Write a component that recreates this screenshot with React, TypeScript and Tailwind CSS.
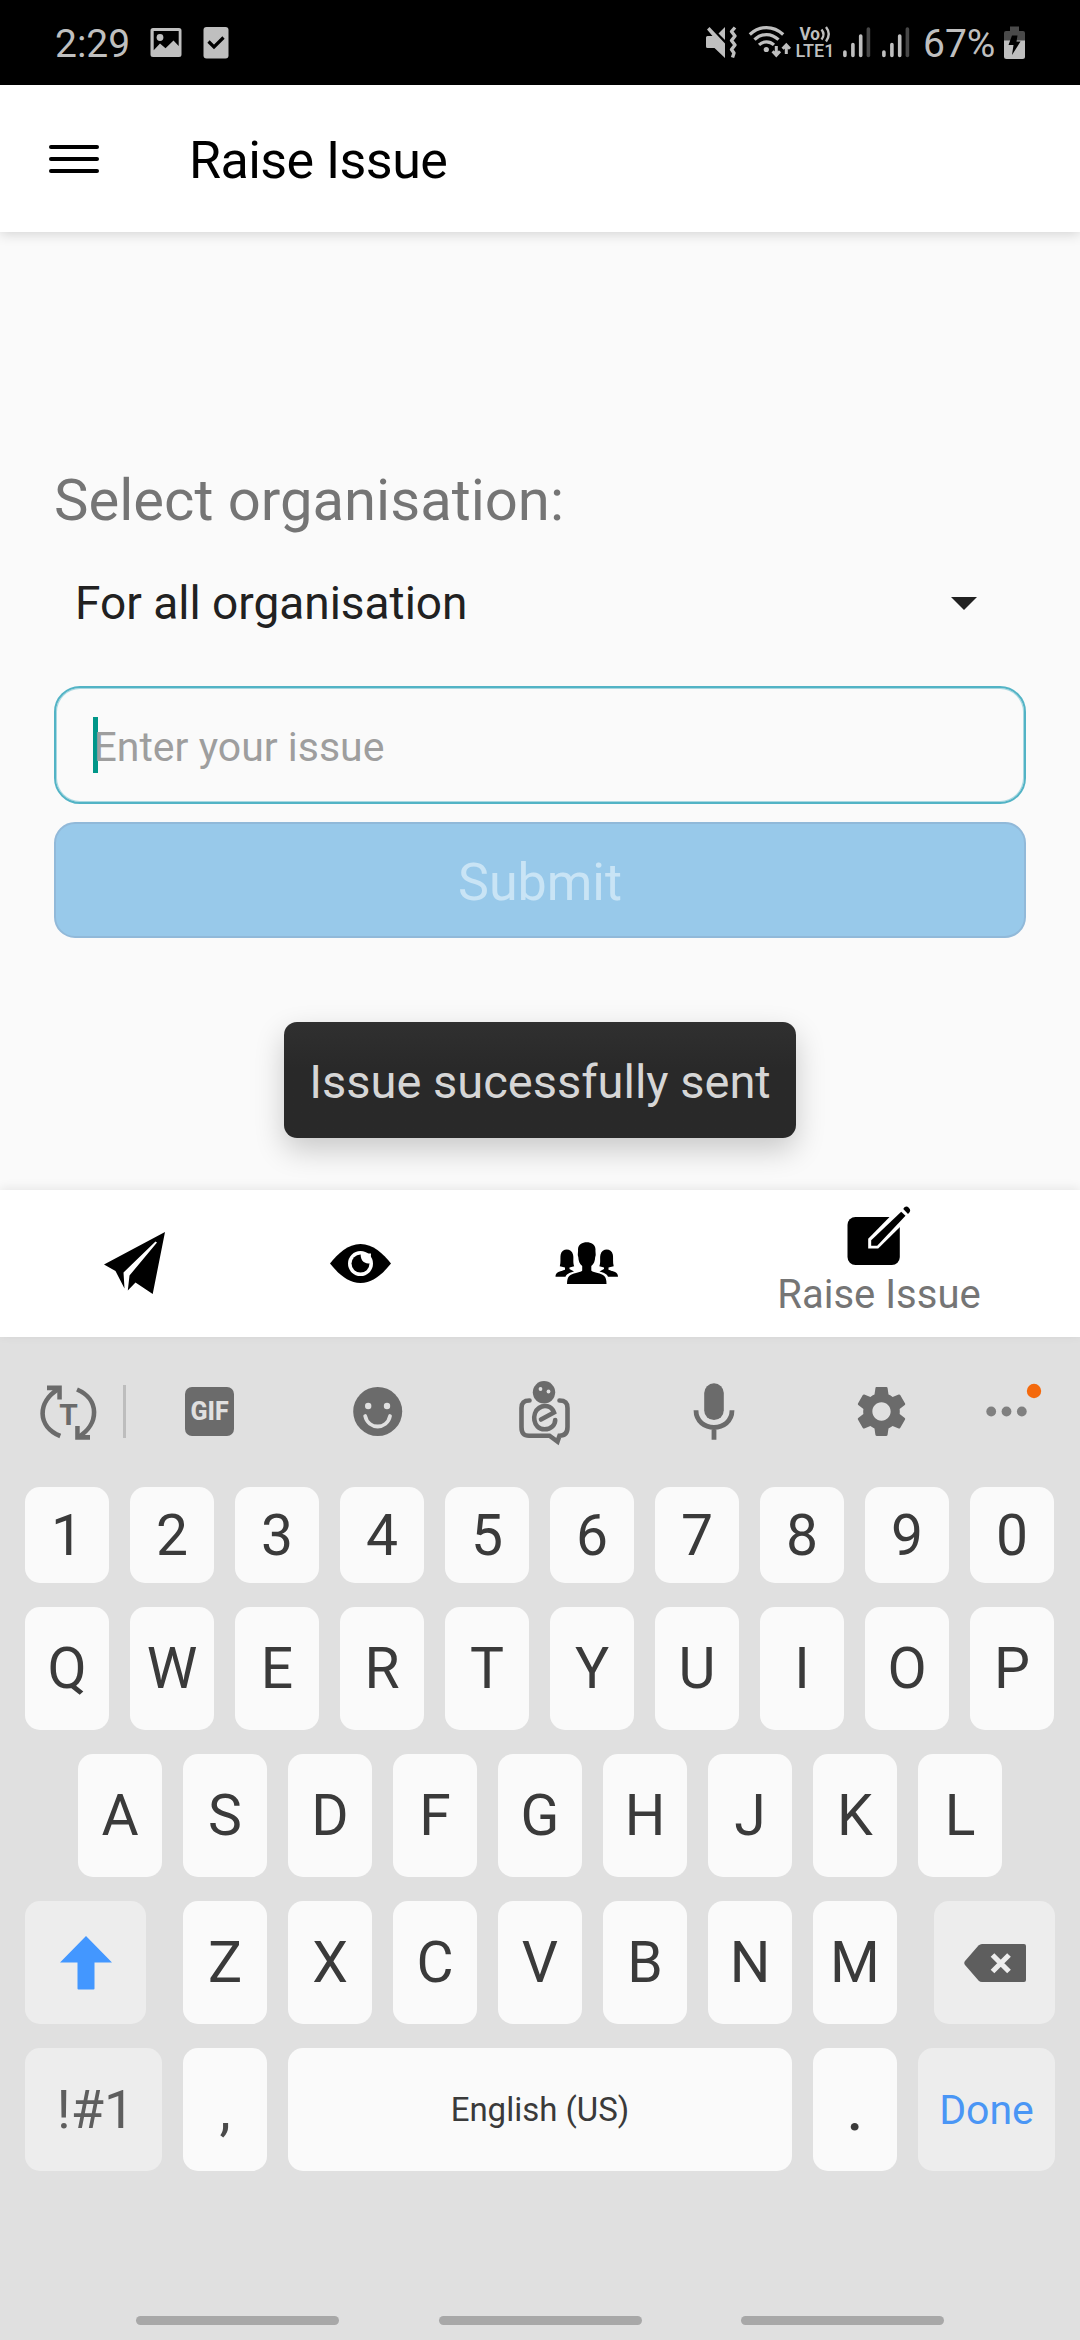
import React from "react";
import { MdSettings } from "react-icons/md";

const LIGHT = "#bfbfbf";
const GREY = "#6b6b6b";

function SignalBars({ x }: { x: number }) {
  return (
    <svg width="28" height="85" viewBox={`${x} 0 28 85`} className="shrink-0">
      <g strokeWidth="3.6" strokeLinecap="round" stroke={LIGHT}>
        <path d={`M${x + 1.9} 52V55.4M${x + 9.9} 44.5V55.4M${x + 17.7} 36V55.4`} />
        <path d={`M${x + 25.4} 29V55.4`} stroke="#474747" />
      </g>
    </svg>
  );
}

function StatusBar() {
  return (
    <div className="flex h-[85px] w-full items-center bg-black text-[#bfbfbf]">
      <span className="ml-[55px] w-[95px] pt-[4px] text-[39px] leading-none">2:29</span>
      <svg width="32" height="85" viewBox="150 0 32 85" className="shrink-0">
        <path
          fillRule="evenodd"
          fill={LIGHT}
          d="M153 28H179Q181.500 28 181.500 30.500V54.500Q181.500 57 179 57H153Q150.500 57 150.500 54.500V30.500Q150.500 28 153 28ZM153.700 31V50.300L160 43.500L165.500 48.300L173.500 40.500L178.700 46V31Z"
        />
        <circle cx="160" cy="37.500" r="3.400" fill={LIGHT} />
      </svg>
      <svg width="26" height="85" viewBox="203 0 26 85" className="ml-[21px] shrink-0">
        <rect x="203.500" y="27" width="25" height="31.600" rx="3" fill={LIGHT} />
        <path d="M208.500 41.500L214 47L223.500 37.500" fill="none" stroke="#000" strokeWidth="3.200" />
      </svg>

      <svg width="32" height="85" viewBox="706 0 32 85" className="ml-[477px] shrink-0">
        <path d="M706 37.500Q706 36 707.500 36H712.500L707 29.500L709.500 27L725 43.500V58L714.500 48H707.500Q706 48 706 46.500Z" fill={LIGHT} />
        <path d="M718.500 33.500L725 27V40Z" fill={LIGHT} />
        <path d="M735 27.500L731.500 31.500L735 36L731.500 40.500L735 45L731.500 49.500L734 53L732.500 57.500" fill="none" stroke={LIGHT} strokeWidth="3.400" strokeLinejoin="round" />
      </svg>
      <svg width="43" height="85" viewBox="748 0 43 85" className="ml-[10px] shrink-0">
        <g fill="none" stroke={LIGHT} strokeWidth="3.200">
          <path d="M749.800 34.500C759.500 25.200 773.500 25.200 783.200 34.500" />
          <path d="M754.500 39.700C761.500 32.800 771.500 32.800 778.500 39.700" />
          <path d="M759 44.900C763.500 40.800 769.500 40.800 774 44.900" />
          <path d="M776.300 46V55M772.600 51.300L776.300 55.200L780 51.300M786.300 54V45M782.600 48.800L786.300 44.900L790 48.800" strokeWidth="3" />
        </g>
        <circle cx="766.300" cy="49.500" r="2.600" fill={LIGHT} />
      </svg>
      <svg width="40" height="85" viewBox="795 0 40 85" className="ml-[4px] shrink-0" fontFamily="Roboto" fontWeight="700" fill={LIGHT}>
        <text x="799.500" y="40" fontSize="18" textLength="20.500" lengthAdjust="spacingAndGlyphs">Vo</text>
        <text x="795.500" y="57" fontSize="17.500" fontWeight="500" textLength="39" lengthAdjust="spacingAndGlyphs">LTE1</text>
        <path d="M821.500 29.500Q825.500 34.500 821.500 39.500M826 27Q831.500 34 826 41.500" fill="none" stroke={LIGHT} strokeWidth="2.400" />
      </svg>
      <div className="ml-[8px] flex gap-[11px]">
        <SignalBars x={843} />
        <SignalBars x={882} />
      </div>
      <span className="ml-[13px] w-[81px] pt-[4px] text-[39px] leading-none">67%</span>
      <svg width="22" height="85" viewBox="1004 0 22 85" className="shrink-0">
        <path d="M1010 26.500H1019V31H1023Q1025 31 1025 33V41H1004V33Q1004 31 1006 31H1010Z" fill="#4a4a4a" />
        <path d="M1004 40.500H1025V56.500Q1025 59 1022.500 59H1006.500Q1004 59 1004 56.500Z" fill={LIGHT} />
        <path d="M1012 35.500H1017.500L1016.500 41.500H1020.500L1012 55L1013.500 45H1008.500Z" fill="#000" />
      </svg>
    </div>
  );
}

function Header() {
  return (
    <header className="relative z-10 flex h-[147px] items-center bg-white pl-[49px] shadow-[0_2px_12px_rgba(0,0,0,0.16)]">
      <div className="flex w-[144px] flex-col gap-2">
        <span className="h-1 w-[50px] rounded-full bg-black" />
        <span className="h-1 w-[50px] rounded-full bg-black" />
        <span className="h-1 w-[50px] rounded-full bg-black" />
      </div>
      <h1 className="-ml-[4px] pt-[4px] text-[52px] leading-none tracking-[-0.55px] text-black">Raise Issue</h1>
    </header>
  );
}

function IssueForm() {
  return (
    <main className="h-[958px] bg-[#fafafa] px-[54px] pt-[229px]">
      <label className="block h-[78px] text-[58px] leading-[78px] text-[#757575]">Select organisation:</label>
      <div className="mt-[19px] flex h-[90px] items-center justify-between pl-[21px] pr-[49px]">
        <span className="text-[46px] leading-none text-[#212121]">For all organisation</span>
        <svg width="26" height="13" viewBox="0 0 26 13">
          <path d="M0 0H26L13 13Z" fill="#212121" />
        </svg>
      </div>
      <div className="mt-[38px] flex h-[118px] items-center rounded-[26px] border-2 border-[#52b3c5] pl-[37px] shadow-[inset_0_0_0_1px_#a8d8e1]">
        <span className="h-14 w-[4.500px] bg-[#009688]" />
        <span className="-ml-[4px] pt-1 text-[41px] leading-none text-[#9e9e9e]">Enter your issue</span>
      </div>
      <button className="mt-[18px] flex h-[116px] w-full items-center justify-center rounded-[21px] border-2 border-[#91b9d9] bg-[#98c9ea] pt-[5px] text-[52px] leading-none text-[#c9e4f5]">
        Submit
      </button>
      <div className="mx-auto mt-[84px] flex h-[116px] w-[512px] items-center justify-center rounded-[13px] bg-linear-to-b from-[#303030] to-[#292929] to-40% pt-[3px] text-[47px] leading-none text-[#d6d6d6] shadow-[0_12px_30px_rgba(0,0,0,0.2)]">
        Issue sucessfully sent
      </div>
    </main>
  );
}

function BottomNav() {
  return (
    <nav className="relative flex h-[147px] bg-white pl-[104px] shadow-[0_-2px_10px_rgba(0,0,0,0.08)]">
      <svg width="62" height="147" viewBox="104 1190 62 147">
        <path d="M104 1264.500L165 1232L152.700 1294L135.500 1282.500L127.800 1290.500L129.500 1275.500L157 1242.500L155.500 1241.500L123.500 1272.500L124.500 1288.500L115.500 1271Z" />
      </svg>
      <svg width="62" height="147" viewBox="330 1190 62 147" className="ml-[164px]">
        <path d="M330 1263.500C338 1253.500 348 1244 360.500 1244S383 1253.500 391 1263.500C383 1273.500 373 1283 360.500 1283S338 1273.500 330 1263.500Z" />
        <circle cx="360.500" cy="1263.600" r="12.500" fill="#fff" />
        <circle cx="360.500" cy="1263.600" r="9" />
        <path d="M360.700 1253.500C360.200 1259.500 363.500 1264.500 370.500 1263.200L371 1253.500Z" fill="#fff" />
      </svg>
      <svg width="64" height="147" viewBox="555 1190 64 147" className="ml-[163px]">
        <g id="member">
          <path d="M555.500 1276.700C555.500 1271.500 561 1271.500 565 1269.700V1267.500L559.800 1266.200C561 1262 560 1258 560.700 1254.500C562 1247.800 571.500 1247.800 573 1254.500C574 1258 572.500 1262 574.200 1266.200L569.500 1267.500V1269L574 1271.500C569 1273 566.500 1274 565.500 1276.700Z" />
        </g>
        <use href="#member" transform="translate(1173.500 0) scale(-1 1)" />
        <path d="M567 1284C567 1275.500 570 1274.500 576 1273C580 1272 581.500 1271.500 582.200 1270.500V1266C579.500 1264 578.500 1261 578.300 1257C577.200 1254 578.300 1253 578 1249.500C578 1239.800 595.500 1239.800 595.500 1249.500C595.200 1253 596.300 1254 595.200 1257C595 1261 594 1264 591.300 1266V1270.500C592 1271.500 593.500 1272 597.500 1273C603.500 1274.500 606.500 1275.500 606.500 1284Z" />
      </svg>
      <div className="ml-[157px] flex w-[206px] flex-col items-center pt-[16px]">
        <svg width="64" height="60" viewBox="846.500 1206.500 64 60">
          <rect x="847" y="1217.500" width="52.300" height="48" rx="8" />
          <path d="M890 1216.500L867.700 1239.300V1249H877.700L900.500 1226.500V1216Z" fill="#fff" />
          <path d="M900.700 1212.200L905 1216.300L876.700 1246.300H870.700V1240.700Z" />
          <path d="M902.800 1209.500C904.500 1206.500 906.500 1206.500 908.300 1208.300C910.300 1210.300 910.300 1212.300 907.500 1214.500Z" />
        </svg>
        <span className="mt-[9px] whitespace-nowrap text-[40px] leading-none text-[#757575]">Raise Issue</span>
      </div>
    </nav>
  );
}

function KeyboardToolbar() {
  return (
    <div className="relative flex h-[150px]">
      <svg width="58" height="150" viewBox="40 1337 58 150" className="ml-10">
        <g fill="none" stroke={GREY} strokeWidth="4.600">
          <path d="M60.300 1436C37 1426.500 37 1402 58.500 1389" />
          <path d="M77 1389.500C99.500 1399 99.500 1424 78.500 1437" />
        </g>
        <path d="M47 1385.500H61.800V1399.500H57.300V1391L52 1390.200H47ZM90 1439.700H75.200V1426H79.700V1434.500L85 1435H90Z" fill={GREY} />
        <text x="68.600" y="1424.500" textAnchor="middle" fontFamily="Roboto" fontWeight="700" fontSize="30" fill={GREY}>T</text>
      </svg>
      <div className="ml-[25px] mt-[48px] h-[53px] w-[3px] bg-[#bdbdbd]" />
      <div className="ml-[59px] mt-[50px] flex h-[49px] w-[49px] items-center justify-center rounded-[7px] bg-[#6b6b6b] text-[25px] font-extrabold leading-none text-[#e0e0e0]">
        GIF
      </div>
      <svg width="50" height="150" viewBox="353 1337 50 150" className="ml-[119px]">
        <circle cx="377.700" cy="1411.500" r="24.500" fill={GREY} />
        <g fill="#e0e0e0">
          <circle cx="368.200" cy="1406" r="3.200" />
          <circle cx="387" cy="1406" r="3.200" />
        </g>
        <path d="M365.200 1416C368 1430 387.300 1430 390 1416" fill="none" stroke="#e0e0e0" strokeWidth="3.800" strokeLinecap="round" />
      </svg>
      <svg width="54" height="150" viewBox="518 1337 54 150" className="ml-[115px]">
        <circle cx="544" cy="1392.300" r="11.200" fill={GREY} />
        <circle cx="540.500" cy="1389" r="1.900" fill="#e0e0e0" />
        <circle cx="548.500" cy="1391.500" r="1.900" fill="#e0e0e0" />
        <g fill="none" stroke={GREY} strokeWidth="4.600" strokeLinecap="round">
          <path d="M529.500 1400.500C524 1400.500 521.500 1402.500 521.500 1408V1427C521.500 1433 523.500 1435.700 529 1435.700H549.500L557.500 1441.500L559.500 1435.700C565 1435.700 567.500 1433 567.500 1427V1408C567.500 1402.500 565 1400.500 559.500 1400.500" />
          <path d="M541 1419.500L554 1412.500C551.500 1405.500 544 1404.500 539 1408C531.500 1413 532.500 1429 544.500 1429.300C551.500 1429.300 555.200 1424.500 555.200 1420" />
        </g>
      </svg>
      <svg width="42" height="150" viewBox="692.500 1337 42 150" className="ml-[120.500px]">
        <rect x="703.700" y="1383.300" width="19.600" height="36.700" rx="9.800" fill={GREY} />
        <path d="M695.500 1410.300C695.500 1433 731.500 1433 731.500 1410.300M713.500 1427V1439.700" fill="none" stroke={GREY} strokeWidth="4.800" />
      </svg>
      <MdSettings size={61} color={GREY} className="ml-[116.500px] mt-[44px]" />
      <svg width="60" height="150" viewBox="984 1337 60 150" className="ml-[72px]">
        <g fill="#808080">
          <circle cx="991.200" cy="1411.500" r="4.900" />
          <circle cx="1006.500" cy="1411.500" r="4.900" />
          <circle cx="1021.800" cy="1411.500" r="4.900" />
        </g>
        <circle cx="1034" cy="1391" r="7.200" fill="#f4690c" />
      </svg>
    </div>
  );
}

function Key({ children, width = "w-[84px]", tone = "bg-[#fafafa]", className = "" }: { children?: React.ReactNode; width?: string; tone?: string; className?: string }) {
  return (
    <div className={`flex h-full shrink-0 items-center justify-center rounded-[15px] leading-none ${width} ${tone} ${className}`}>{children}</div>
  );
}

function LetterRow({ keys }: { keys: string }) {
  return (
    <>
      {keys.split("").map((k) => (
        <Key key={k}>{k}</Key>
      ))}
    </>
  );
}

function Keyboard() {
  return (
    <section className="h-[1003px] bg-[#e0e0e0] text-[#3a3a3a]">
      <KeyboardToolbar />
      <div className="flex flex-col gap-6 text-[57px]">
        <div className="flex h-[96px] justify-center gap-[21px] pr-px">
          <LetterRow keys="1234567890" />
        </div>
        <div className="flex h-[123px] justify-center gap-[21px] pr-px">
          <LetterRow keys="QWERTYUIOP" />
        </div>
        <div className="flex h-[123px] justify-center gap-[21px]">
          <LetterRow keys="ASDFGHJKL" />
        </div>
        <div className="flex h-[123px] justify-center gap-[37px]">
          <Key width="w-[121px]" tone="bg-[#ededed]">
            <svg width="52" height="54" viewBox="0 0 52 54">
              <path d="M26 0L52 26.500H34.500V52.500Q34.500 53.500 33.500 53.500H18.500Q17.500 53.500 17.500 52.500V26.500H0Z" fill="#4397ff" />
            </svg>
          </Key>
          <div className="flex gap-[21px]">
            <LetterRow keys="ZXCVBNM" />
          </div>
          <Key width="w-[121px]" tone="bg-[#ededed]">
            <svg width="62" height="38" viewBox="0 0 62 38">
              <path d="M18 0H60Q62 0 62 2V36Q62 38 60 38H18Q16 38 14.500 36.500L1 21Q-0.500 19 1 17L14.500 1.500Q16 0 18 0Z" fill="#5e5e5e" />
              <path d="M28.500 11L45 27.500M45 11L28.500 27.500" stroke="#ededed" strokeWidth="5.200" />
            </svg>
          </Key>
        </div>
        <div className="flex h-[123px] justify-center gap-[21px]">
          <Key width="w-[137px]" tone="bg-[#ededed]" className="pl-[4px] text-[54px] text-[#5e5e5e]">!#1</Key>
          <Key className="text-[#4a4a4a]">,</Key>
          <Key width="w-[504px]" className="text-[33px]">English (US)</Key>
          <Key className="pt-[2px] font-medium">.</Key>
          <Key width="w-[137px]" tone="bg-[#ededed]" className="pt-px text-[41px] text-[#4a96f5]">Done</Key>
        </div>
      </div>
      <div className="mt-[145px] flex justify-center gap-[99.500px]">
        <span className="h-[9px] w-[203px] rounded-full bg-[#a8a8a8]" />
        <span className="h-[9px] w-[203px] rounded-full bg-[#a8a8a8]" />
        <span className="h-[9px] w-[203px] rounded-full bg-[#a8a8a8]" />
      </div>
    </section>
  );
}

export default function App() {
  return (
    <div className="h-[2340px] w-[1080px] overflow-hidden bg-[#fafafa] font-['Roboto',sans-serif]">
      <StatusBar />
      <Header />
      <IssueForm />
      <BottomNav />
      <Keyboard />
    </div>
  );
}
